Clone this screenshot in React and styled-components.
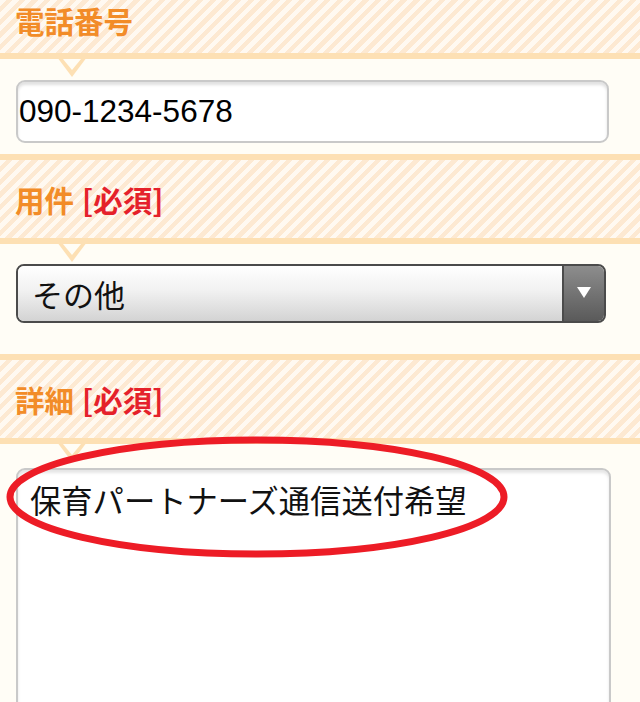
import React from 'react';
import styled, { createGlobalStyle } from 'styled-components';

const GlobalStyle = createGlobalStyle`
  html, body {
    margin: 0;
    padding: 0;
    background: #fffdf6;
    overflow: hidden;
  }
  body {
    font-family: "Noto Sans CJK JP", "Liberation Sans", sans-serif;
  }
`;

const Page = styled.div`
  width: 640px;
  height: 702px;
  overflow: hidden;
  background: #fffdf6;
`;

const Header = styled.div`
  position: relative;
  box-sizing: border-box;
  height: ${p => (p.$first ? '59px' : '90px')};
  display: flex;
  align-items: center;
  padding: ${p => (p.$first ? '0 0 11px 15px' : '1px 0 0 15px')};
  border-top: ${p => (p.$first ? 'none' : '6px solid #fde0b4')};
  border-bottom: 6px solid #fde0b4;
  background: repeating-linear-gradient(
    135deg,
    #fff9f1 0px,
    #fff9f1 4.5px,
    #fde9d2 4.5px,
    #fde9d2 9px
  );

  &::before {
    content: "";
    position: absolute;
    top: 100%;
    left: 54px;
    border-left: 18px solid transparent;
    border-right: 18px solid transparent;
    border-top: 24px solid #fde0b4;
  }
  &::after {
    content: "";
    position: absolute;
    top: calc(100% + 6px);
    left: 63px;
    border-left: 9px solid transparent;
    border-right: 9px solid transparent;
    border-top: 11px solid #fffdf6;
  }
`;

const Label = styled.h2`
  margin: 0;
  font-size: 29.5px;
  line-height: 1;
  font-weight: 700;
  color: #f28c28;
`;

const Required = styled.span`
  color: #e5212b;
  margin-left: 8px;
`;

const Body = styled.div`
  position: relative;
  padding: ${p => p.$pad};
`;

const TextInput = styled.div`
  box-sizing: border-box;
  height: 63px;
  display: flex;
  align-items: center;
  padding-left: 1px;
  border: 2px solid #c9c9c9;
  border-radius: 9px;
  background: #fff;
  box-shadow: inset 0 3px 3px rgba(0, 0, 0, 0.12);
  font-family: "Liberation Sans", Arial, sans-serif;
  font-size: 31.5px;
  color: #000;
`;

const Select = styled.div`
  box-sizing: border-box;
  height: 59px;
  display: flex;
  border: 2px solid #4b4b4b;
  border-radius: 8px;
  overflow: hidden;
`;

const SelectValue = styled.div`
  flex: 1;
  display: flex;
  align-items: center;
  padding-left: 14px;
  background: linear-gradient(#ffffff, #f1f1f1 45%, #d3d3d3);
  font-size: 31px;
  color: #111;
`;

const SelectArrow = styled.div`
  width: 40px;
  display: flex;
  align-items: center;
  justify-content: center;
  border-left: 2px solid #4b4b4b;
  background: linear-gradient(#8d8d8d, #5a5a5a);

  &::after {
    content: "";
    border-left: 7px solid transparent;
    border-right: 7px solid transparent;
    border-top: 11px solid #fff;
    margin-bottom: 2px;
  }
`;

const TextArea = styled.div`
  box-sizing: border-box;
  height: 260px;
  padding: 10px 12px;
  border: 2px solid #c9c9c9;
  border-radius: 9px;
  background: #fff;
  box-shadow: inset 0 3px 3px rgba(0, 0, 0, 0.1);
  font-size: 31.3px;
  line-height: 1.3;
  color: #111;
  white-space: nowrap;
`;

const Mark = styled.svg`
  position: absolute;
  left: 0;
  top: -8px;
  pointer-events: none;
`;

function FieldHeader({ label, required, first }) {
  return (
    <Header $first={first}>
      <Label>
        {label}
        {required && <Required>[必須]</Required>}
      </Label>
    </Header>
  );
}

export default function App() {
  return (
    <Page>
      <GlobalStyle />
      <FieldHeader label="電話番号" first />
      <Body $pad="21px 31px 11px 16px">
        <TextInput>090-1234-5678</TextInput>
      </Body>

      <FieldHeader label="用件" required />
      <Body $pad="20px 34px 31px 16px">
        <Select>
          <SelectValue>その他</SelectValue>
          <SelectArrow />
        </Select>
      </Body>

      <FieldHeader label="詳細" required />
      <Body $pad="24px 29px 0 16px">
        <TextArea>保育パートナーズ通信送付希望</TextArea>
        <Mark width="520" height="130" viewBox="0 0 520 130">
          <ellipse cx="257" cy="61" rx="247" ry="57" fill="none" stroke="#ed1c26" strokeWidth="7" />
        </Mark>
      </Body>
    </Page>
  );
}
